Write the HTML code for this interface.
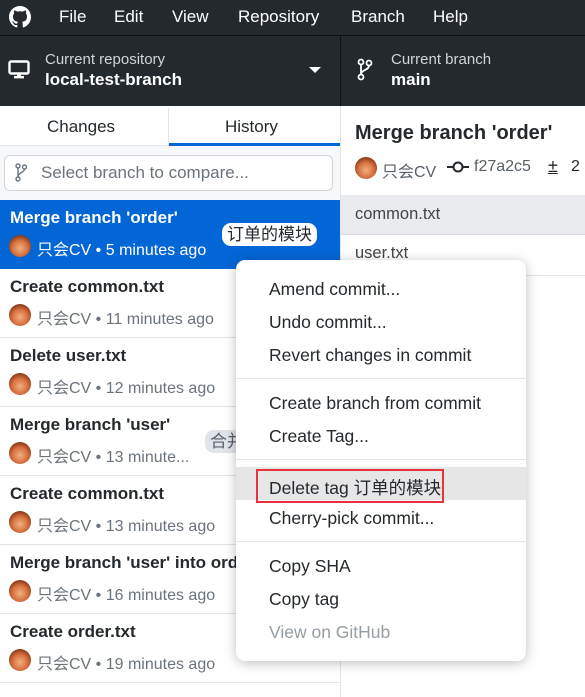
<!DOCTYPE html>
<html><head><meta charset="utf-8"><style>
*{box-sizing:border-box;margin:0;padding:0}
body{width:585px;height:697px;overflow:hidden;background:#fff;font-family:"Liberation Sans","Noto Sans CJK SC",sans-serif;position:relative;color:#24292e}
.abs{position:absolute}
.menubar{left:0;top:0;width:585px;height:36px;background:#24292e;border-bottom:1px solid #111}
.menubar span{position:absolute;top:7px;color:#fff;font-size:17px}
.toolbar{left:0;top:36px;width:585px;height:70px;background:#24292e}
.tb-small{color:#d1d5da;font-size:15px}
.tb-big{color:#fff;font-size:17px;font-weight:bold}
.row{left:0;width:340px;height:69px;border-bottom:1px solid #e1e4e8;background:#fff;overflow:hidden}
.row .t{position:absolute;left:10px;top:8px;font-size:17px;font-weight:bold;white-space:nowrap}
.row .m{position:absolute;left:37px;top:36px;font-size:16px;color:#6a737d;white-space:nowrap}
.av{position:absolute;left:9px;top:35px;width:22px;height:22px;border-radius:50%;background:radial-gradient(circle at 50% 60%,#f0b080 0,#d87040 45%,#7a3010 80%)}
.menu{left:236px;top:260px;width:290px;height:401px;background:#fff;border-radius:9px;box-shadow:0 2px 12px rgba(0,0,0,.25)}
.mi{position:absolute;left:33px;font-size:17.5px;color:#24292e;white-space:nowrap}
.sep{position:absolute;left:0;width:290px;height:1px;background:#e1e4e8}
</style></head><body>
<div class="abs menubar">
<svg style="position:absolute;left:9px;top:6px" width="22" height="22" viewBox="0 0 16 16"><path fill="#fff" d="M8 0C3.580 0 0 3.58 0 8c0 3.54 2.29 6.53 5.47 7.59.4.07.55-.17.55-.38 0-.19-.01-.82-.01-1.49-2.01.37-2.53-.49-2.69-.94-.09-.23-.48-.94-.82-1.13-.28-.15-.68-.52-.01-.53.63-.01 1.08.58 1.230.82.72 1.21 1.87.87 2.33.66.07-.52.28-.87.51-1.07-1.78-.2-3.64-.89-3.64-3.95 0-.87.31-1.59.82-2.15-.08-.2-.36-1.02.08-2.12 0 0 .67-.21 2.2.82.64-.18 1.32-.27 2-.27.68 0 1.36.09 2 .27 1.53-1.04 2.2-.82 2.2-.82.44 1.1.16 1.92.08 2.12.51.56.82 1.27.82 2.15 0 3.07-1.87 3.75-3.65 3.95.29.25.54.73.54 1.48 0 1.07-.01 1.93-.01 2.2 0 .21.15.46.55.38A8.013 8.013 0 0016 8c0-4.42-3.58-8-8-8z"/></svg>
<span style="left:59px">File</span><span style="left:114px">Edit</span><span style="left:172px">View</span><span style="left:238px">Repository</span><span style="left:351px">Branch</span><span style="left:433px">Help</span>
</div>
<div class="abs toolbar">
<svg style="position:absolute;left:8px;top:24px" width="22" height="20" viewBox="0 0 22 20"><rect x="1.5" y="1.5" width="19" height="12" rx="1.5" fill="none" stroke="#fff" stroke-width="2.4"/><rect x="9" y="13" width="4" height="4" fill="#fff"/><rect x="6" y="16" width="10" height="2.4" fill="#fff"/></svg>
<div class="abs tb-small" style="left:45px;top:15px">Current repository</div>
<div class="abs tb-big" style="left:45px;top:34px">local-test-branch</div>
<div class="abs" style="left:309px;top:31px;width:0;height:0;border-left:6px solid transparent;border-right:6px solid transparent;border-top:6px solid #fff"></div>
<div class="abs" style="left:340px;top:0;width:1px;height:70px;background:#111"></div>
<svg style="position:absolute;left:357px;top:22px" width="16" height="24" viewBox="0 0 16 24"><circle cx="4" cy="4" r="2.5" fill="none" stroke="#fff" stroke-width="1.8"/><circle cx="4" cy="19" r="2.5" fill="none" stroke="#fff" stroke-width="1.8"/><circle cx="12" cy="5" r="2.5" fill="none" stroke="#fff" stroke-width="1.8"/><path d="M4 6.5v10M12 7.5c0 5-8 4-8 9" fill="none" stroke="#fff" stroke-width="1.8"/></svg>
<div class="abs tb-small" style="left:391px;top:15px">Current branch</div>
<div class="abs tb-big" style="left:391px;top:34px">main</div>
</div>
<div class="abs" style="left:0;top:106px;width:340px;height:40px;background:#fff;border-bottom:1px solid #e1e4e8"></div>
<div class="abs" style="left:168px;top:108px;width:1px;height:38px;background:#e1e4e8"></div>
<div class="abs" style="left:47px;top:117px;font-size:17px">Changes</div>
<div class="abs" style="left:225px;top:117px;font-size:17px">History</div>
<div class="abs" style="left:169px;top:143px;width:171px;height:3px;background:#0366d6"></div>
<div class="abs" style="left:0;top:146px;width:340px;height:54px;background:#f6f8fa"></div>
<div class="abs" style="left:4px;top:155px;width:329px;height:36px;background:#fff;border:1px solid #d1d5da;border-radius:6px"></div>
<svg style="position:absolute;left:15px;top:163px" width="12" height="20" viewBox="0 0 12 20"><circle cx="3" cy="3" r="2" fill="none" stroke="#6a737d" stroke-width="1.4"/><circle cx="3" cy="16" r="2" fill="none" stroke="#6a737d" stroke-width="1.4"/><circle cx="9.5" cy="4" r="2" fill="none" stroke="#6a737d" stroke-width="1.4"/><path d="M3 5v9M9.5 6c0 4-6.5 3-6.5 8" fill="none" stroke="#6a737d" stroke-width="1.4"/></svg>
<div class="abs" style="left:41px;top:163px;font-size:17px;color:#6a737d">Select branch to compare...</div>
<div class="abs row" style="top:200px;background:#0366d6;border:0;overflow:visible"><div class="t" style="color:#fff">Merge branch 'order'</div><div class="av"></div><div class="m" style="color:#fff">只会CV • 5 minutes ago</div>
<div style="position:absolute;left:222px;top:23px;background:#fff;color:#24292e;border-radius:9px;padding:0 5px;font-size:17px;height:23px;line-height:23px">订单的模块</div></div>
<div class="abs row" style="top:269px"><div class="t">Create common.txt</div><div class="av"></div><div class="m">只会CV • 11 minutes ago</div></div>
<div class="abs row" style="top:338px"><div class="t">Delete user.txt</div><div class="av"></div><div class="m">只会CV • 12 minutes ago</div></div>
<div class="abs row" style="top:407px"><div class="t">Merge branch 'user'</div><div class="av"></div><div class="m">只会CV • 13 minute...</div>
<div style="position:absolute;left:205px;top:23px;background:#e1e4e8;border-radius:9px;padding:0 5px;font-size:17px;height:23px;line-height:23px;color:#586069">合并</div></div>
<div class="abs row" style="top:476px"><div class="t">Create common.txt</div><div class="av"></div><div class="m">只会CV • 13 minutes ago</div></div>
<div class="abs row" style="top:545px"><div class="t">Merge branch 'user' into order</div><div class="av"></div><div class="m">只会CV • 16 minutes ago</div></div>
<div class="abs row" style="top:614px"><div class="t">Create order.txt</div><div class="av"></div><div class="m">只会CV • 19 minutes ago</div></div>
<div class="abs" style="left:340px;top:106px;width:1px;height:591px;background:#e1e4e8"></div>
<div class="abs" style="left:355px;top:122px;font-size:20px;font-weight:bold">Merge branch 'order'</div>
<div class="abs" style="left:355px;top:157px;width:22px;height:22px;border-radius:50%;background:radial-gradient(circle at 50% 60%,#f0b080 0,#d87040 45%,#7a3010 80%)"></div>
<div class="abs" style="left:382px;top:158px;font-size:16px;color:#586069">只会CV</div>
<svg style="position:absolute;left:447px;top:160px" width="22" height="14" viewBox="0 0 22 14"><path d="M0 7h6M16 7h6" stroke="#24292e" stroke-width="2"/><circle cx="11" cy="7" r="4.5" fill="none" stroke="#24292e" stroke-width="2"/></svg>
<div class="abs" style="left:474px;top:158px;font-size:16px;color:#586069">f27a2c5</div>
<div class="abs" style="left:548px;top:156px;font-size:18px;text-decoration:underline">±</div>
<div class="abs" style="left:571px;top:158px;font-size:16px">2</div>
<div class="abs" style="left:341px;top:195px;width:244px;height:40px;background:#e9ebee;border-bottom:1px solid #d8dce0"></div>
<div class="abs" style="left:355px;top:205px;font-size:16.5px;color:#444">common.txt</div>
<div class="abs" style="left:341px;top:275px;width:244px;height:1px;background:#e1e4e8"></div>
<div class="abs" style="left:355px;top:244px;font-size:16.5px;color:#444">user.txt</div>
<div class="abs menu">
<div class="mi" style="top:19px">Amend commit...</div>
<div class="mi" style="top:52px">Undo commit...</div>
<div class="mi" style="top:85px">Revert changes in commit</div>
<div class="sep" style="top:118px"></div>
<div class="mi" style="top:133px">Create branch from commit</div>
<div class="mi" style="top:166px">Create Tag...</div>
<div class="sep" style="top:199px"></div>
<div style="position:absolute;left:0;top:207px;width:290px;height:33px;background:#e6e6e6"></div>
<div style="position:absolute;left:20px;top:209px;width:188px;height:34px;border:2px solid #e8323c"></div>
<div class="mi" style="top:215px">Delete tag 订单的模块</div>
<div class="mi" style="top:248px">Cherry-pick commit...</div>
<div class="sep" style="top:281px"></div>
<div class="mi" style="top:296px">Copy SHA</div>
<div class="mi" style="top:329px">Copy tag</div>
<div class="mi" style="top:362px;color:#959da5">View on GitHub</div>
</div>
</body></html>
